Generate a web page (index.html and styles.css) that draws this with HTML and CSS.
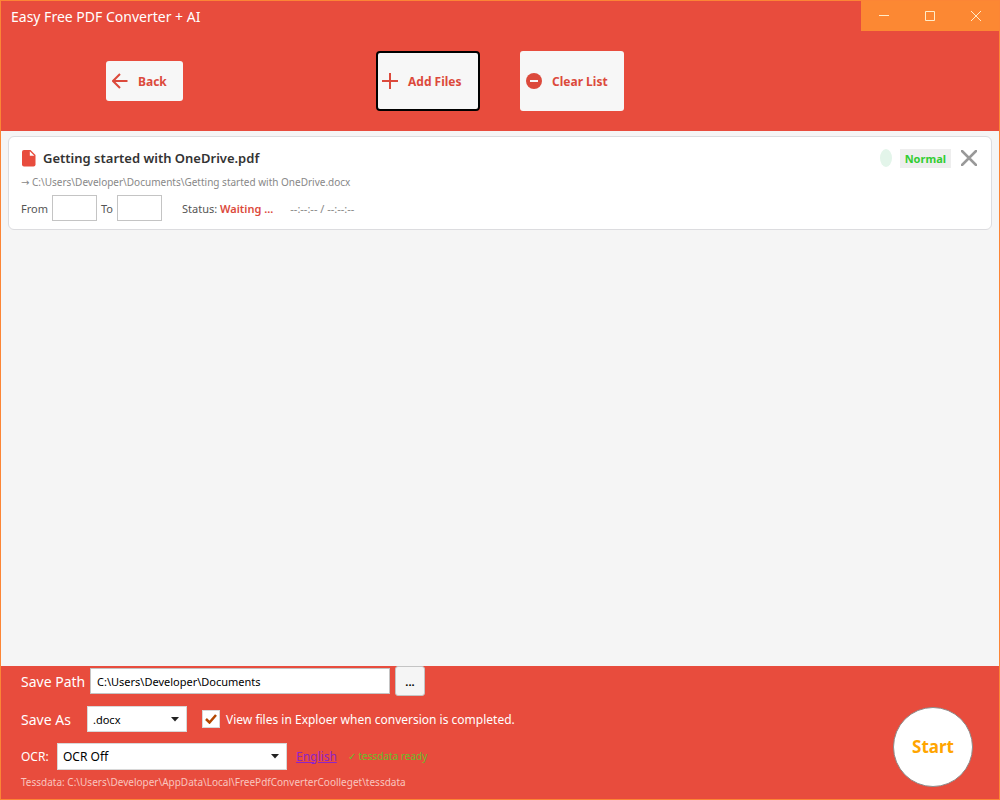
FILE: index.html
```html
<!DOCTYPE html>
<html lang="en">

<head>
    <meta charset="UTF-8">
    <title>Easy Free PDF Converter + AI</title>
    <meta name="viewport" content="width=device-width, initial-scale=1.0">
    <link rel="stylesheet" href="styles.css">
</head>

<body>
    <div class="window">
        <!-- title bar and toolbar -->
        <header class="header">
            <div class="titlebar">
                <span class="title">Easy Free PDF Converter + AI</span>
                <div class="win_controls">
                    <button class="win_btn" aria-label="Minimize">
                        <svg width="10" height="10" viewBox="0 0 10 10"><path d="M0 4.5H10" /></svg>
                    </button>
                    <button class="win_btn" aria-label="Maximize">
                        <svg width="10" height="10" viewBox="0 0 10 10"><path d="M.5 .5H9.5V9.5H.5Z" /></svg>
                    </button>
                    <button class="win_btn" aria-label="Close">
                        <svg width="10" height="10" viewBox="0 0 10 10"><path d="M0 0L10 10M10 0L0 10" /></svg>
                    </button>
                </div>
            </div>
            <div class="toolbar">
                <button class="btn btn_back">
                    <svg width="16" height="16" viewBox="0 0 16 16"><path d="M15.5 8H1.5M8 1L1 8L8 15" fill="none" stroke="currentColor" stroke-width="2" /></svg>
                    Back
                </button>
                <div class="list_actions">
                    <button class="btn btn_big btn_focus">
                        <svg width="16" height="16" viewBox="0 0 16 16"><path d="M8 0V16M0 8H16" fill="none" stroke="currentColor" stroke-width="2" /></svg>
                        Add Files
                    </button>
                    <button class="btn btn_big">
                        <svg width="16" height="16" viewBox="0 0 16 16"><circle cx="8" cy="8" r="8" fill="currentColor" /><path d="M4 8H12" stroke="#f7f7f7" stroke-width="2" /></svg>
                        Clear List
                    </button>
                </div>
            </div>
        </header>

        <!-- files to convert -->
        <main class="files">
            <div class="card">
                <div class="card_head">
                    <svg width="14" height="17" viewBox="0 0 14 17"><path d="M2 0H8.5L13.5 5V14.5Q13.5 16.5 11.5 16.5H2Q0 16.5 0 14.5V2Q0 0 2 0Z" fill="#e84c3d" /><path d="M7.8 1.2V5.7H12.3Z" fill="#fff" /></svg>
                    <span class="file_name">Getting started with OneDrive.pdf</span>
                    <span class="dot"></span>
                    <span class="badge">Normal</span>
                    <button class="remove" aria-label="Remove">
                        <svg width="16" height="16" viewBox="0 0 16 16"><path d="M1 1L15 15M15 1L1 15" fill="none" stroke="#999" stroke-width="2.5" stroke-linecap="round" /></svg>
                    </button>
                </div>
                <div class="output"><span class="arrow">→</span> C:\Users\Developer\Documents\Getting started with OneDrive.docx</div>
                <div class="card_row">
                    <label for="from">From</label>
                    <input class="page_num" type="text" id="from">
                    <label for="to">To</label>
                    <input class="page_num" type="text" id="to">
                    <span class="status">Status: <b class="waiting">Waiting ...</b></span>
                    <span class="time">--:--:-- / --:--:--</span>
                </div>
            </div>
        </main>

        <!-- output settings -->
        <footer class="footer">
            <div class="settings">
                <div class="row row_path">
                    <label class="label_big" for="path">Save Path</label>
                    <input class="path" type="text" id="path" value="C:\Users\Developer\Documents">
                    <button class="browse">...</button>
                </div>
                <div class="row">
                    <label class="label_big label_as" for="format">Save As</label>
                    <div class="select">
                        <select class="format" id="format">
                            <option>.docx</option>
                        </select>
                        <svg width="8" height="5" viewBox="0 0 8 5"><path d="M0 0H8L4 4.5Z" fill="#222" /></svg>
                    </div>
                    <div class="check">
                        <input type="checkbox" id="view" checked>
                        <svg width="12" height="10" viewBox="0 0 12 10"><path d="M1 5L4.5 8.5L11 1" fill="none" stroke="#b34700" stroke-width="2.5" /></svg>
                    </div>
                    <label class="label_view" for="view">View files in Exploer when conversion is completed.</label>
                </div>
                <div class="row row_ocr">
                    <label class="label_ocr" for="ocr">OCR:</label>
                    <div class="select">
                        <select class="ocr" id="ocr">
                            <option>OCR Off</option>
                        </select>
                        <svg width="8" height="5" viewBox="0 0 8 5"><path d="M0 0H8L4 4.5Z" fill="#222" /></svg>
                    </div>
                    <a class="lang" href="#">English</a>
                    <span class="ready">✓ tessdata ready</span>
                </div>
                <div class="tessdata">Tessdata: C:\Users\Developer\AppData\Local\FreePdfConverterCoolleget\tessdata</div>
            </div>
            <button class="start">Start</button>
        </footer>
    </div>
</body>

</html>
```

FILE: styles.css
```css
* {
    box-sizing: border-box;
}

body {
    margin: 0;
    font-family: "Segoe UI", "Noto Sans", "Open Sans", sans-serif;
    font-size: 11px;
    color: #555;
}

button,
input,
select {
    margin: 0;
    font-family: inherit;
    font-size: inherit;
}

.window {
    display: flex;
    flex-direction: column;
    min-height: 100vh;
    border: 1px solid #fc8535;
    background-color: #f5f5f5;
}

.header {
    background-color: #e84c3d;
    color: white;
}

.titlebar {
    display: flex;
    justify-content: space-between;
    height: 30px;
}

.title {
    padding-left: 10px;
    font-size: 14px;
    line-height: 32px;
}

.win_controls {
    display: flex;
}

.win_btn {
    display: flex;
    align-items: center;
    justify-content: center;
    width: 46px;
    padding: 0;
    border: none;
    background-color: #fc8833;
}

.win_btn path {
    fill: none;
    stroke: #ffecc8;
    stroke-width: 1;
}

.toolbar {
    display: grid;
    grid-template-columns: 1fr auto 1fr;
    align-items: center;
    height: 100px;
}

.btn {
    display: flex;
    align-items: center;
    gap: 10px;
    height: 40px;
    padding: 0 16px 0 6px;
    border: none;
    border-radius: 3px;
    background-color: #f7f7f7;
    color: #dc4a3c;
    font-size: 12px;
    font-weight: 700;
}

.btn_back {
    justify-self: start;
    margin-left: 105px;
}

.list_actions {
    display: flex;
    gap: 40px;
}

.btn_big {
    width: 104px;
    height: 60px;
    padding-right: 0;
}

.btn_focus {
    padding-left: 4px;
    border: 2px solid black;
    border-radius: 4px;
}

.files {
    flex: 1;
    padding: 5px 7px;
}

.card {
    padding: 9px 12px 8px;
    border: 1px solid #dcdcdf;
    border-radius: 6px;
    background-color: white;
}

.card_head {
    display: flex;
    align-items: center;
    height: 24px;
    padding-left: 1px;
}

.file_name {
    flex: 1;
    padding-left: 7px;
    color: #333;
    font-size: 13px;
    font-weight: 600;
}

.dot {
    width: 12px;
    height: 18px;
    border-radius: 50%;
    background-color: #e3f5ea;
}

.badge {
    margin: 0 10px 0 8px;
    padding: 0 5px;
    background-color: #eee;
    color: #32cd32;
    font-weight: 700;
    line-height: 19px;
}

.remove {
    display: flex;
    padding: 0;
    border: none;
    background: none;
}

.remove svg {
    margin-right: 2px;
}

.output {
    color: #888;
    font-size: 10px;
    line-height: 25px;
}

.arrow {
    font-family: "DejaVu Sans", sans-serif;
}

.card_row {
    display: flex;
    align-items: center;
    gap: 4px;
}

.page_num {
    width: 45px;
    height: 26px;
    border: 1px solid #c4c4c4;
    background-color: white;
}

.status {
    margin-left: 16px;
}

.waiting {
    color: #dc4a3c;
    font-weight: 600;
}

.time {
    margin-left: 13px;
    color: #888;
}

.footer {
    display: flex;
    align-items: center;
    justify-content: space-between;
    padding: 0 26px 0 20px;
    background-color: #e84c3d;
    color: white;
}

.settings {
    height: 133px;
}

.row {
    display: flex;
    align-items: center;
    height: 46px;
}

.row_path {
    height: 30px;
}

.row_ocr {
    height: 28px;
}

.label_big {
    width: 69px;
    font-size: 14px;
}

.label_as {
    width: 66px;
}

.path {
    width: 300px;
    height: 26px;
    padding: 0 6px;
    border: 1px solid #c4c4c4;
    font-size: 11px;
}

.browse {
    width: 30px;
    height: 30px;
    margin-left: 5px;
    padding: 0;
    border: 1px solid #c4c4c4;
    border-radius: 3px;
    background-color: #f5f5f5;
    font-weight: 700;
}

.select {
    display: grid;
    align-items: center;
}

.select select {
    grid-area: 1 / 1;
    height: 26px;
    padding: 0 5px;
    border: 1px solid #d8d8d8;
    border-radius: 0;
    background-color: white;
    color: black;
    appearance: none;
}

.select svg {
    grid-area: 1 / 1;
    justify-self: end;
    margin-right: 8px;
    pointer-events: none;
}

.format {
    width: 100px;
}

.select .ocr {
    width: 230px;
    height: 27px;
    font-size: 12px;
}

.check {
    display: grid;
    place-items: center;
    margin: 0 6px 0 15px;
}

.check input {
    grid-area: 1 / 1;
    width: 18px;
    height: 18px;
    border: 1px solid #d8d8d8;
    background-color: white;
    appearance: none;
}

.check svg {
    grid-area: 1 / 1;
    pointer-events: none;
}

.check input:not(:checked) + svg {
    visibility: hidden;
}

.label_view {
    font-size: 12px;
}

.label_ocr {
    width: 36px;
    font-size: 12px;
}

.lang {
    margin: 0 11px 0 9px;
    color: #8e24c8;
    font-size: 12px;
}

.ready {
    color: #6abf2a;
    font-size: 10px;
}

.tessdata {
    color: #f9c5bf;
    font-size: 10px;
    line-height: 24px;
}

.start {
    width: 80px;
    height: 80px;
    margin-top: 28px;
    padding: 0;
    border: 1px solid #8c8c8c;
    border-radius: 50%;
    background-color: white;
    color: #ffa500;
    font-size: 17px;
    font-weight: 700;
}
```
